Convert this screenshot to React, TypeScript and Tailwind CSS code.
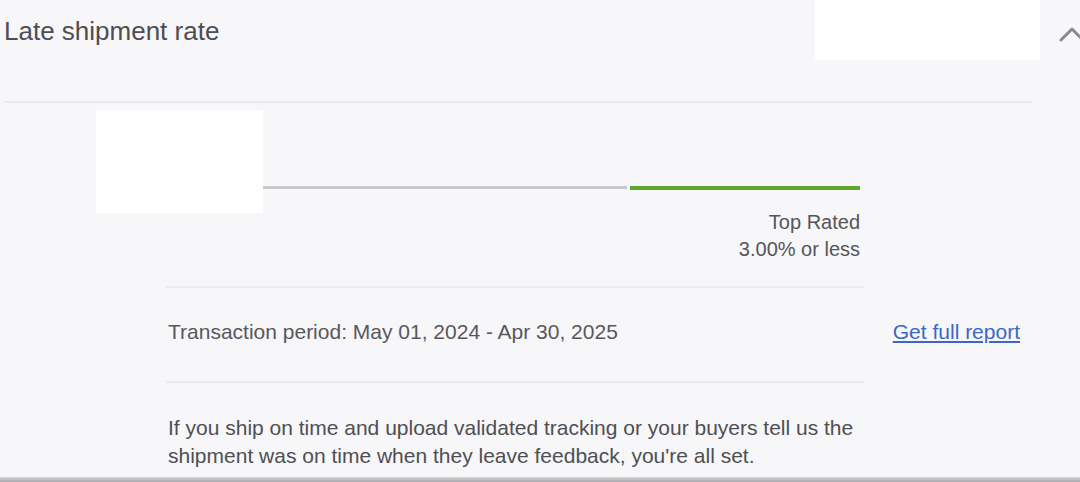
export default function App() {
  return (
    <div className="relative flex h-[482px] w-[1080px] flex-col overflow-hidden bg-[#f7f6f9] font-['Liberation_Sans',Arial,sans-serif] text-[#505050]">
      {/* Header */}
      <div className="flex h-[60px] shrink-0 items-center">
        <h2 className="pl-[4px] pt-[2px] text-[26px] leading-[30px] text-[#4d4d52]">Late shipment rate</h2>
        <div className="ml-auto h-[60px] w-[225px] bg-white" />
        <svg className="ml-[18px] mt-[8px] h-[16px] w-[22px] shrink-0 overflow-visible" viewBox="0 0 22 16" fill="none">
          <path d="M3 14 L14 3 L25 14" stroke="#8a8a8e" strokeWidth="3" strokeLinecap="round" strokeLinejoin="round" />
        </svg>
      </div>

      <div className="ml-[4px] mt-[41px] h-[2px] w-[1028px] shrink-0 bg-[#ebeaed]" />

      {/* Gauge */}
      <div className="ml-[96px] mt-[7px] flex shrink-0">
        <div className="h-[103px] w-[167px] bg-white" />
        <div className="flex w-[597px] flex-col">
          <div className="mt-[76px] flex items-start gap-[3px]">
            <div className="h-[3px] w-[364px] bg-[#c9c8cc]" />
            <div className="h-[4px] w-[230px] bg-[#5aa92c]" />
          </div>
          <div className="mt-[19px] text-right text-[20px] leading-[27px] text-[#555558]">
            <div>Top Rated</div>
            <div>3.00% or less</div>
          </div>
        </div>
      </div>

      <div className="ml-[166px] mt-[23px] h-[2px] w-[698px] shrink-0 bg-[#ebeaed]" />

      {/* Transaction period */}
      <div className="ml-[168px] mr-[60px] mt-[30px] flex items-center justify-between text-[21px] leading-[28px]">
        <span className="text-[#58585c]">Transaction period: May 01, 2024 - Apr 30, 2025</span>
        <a href="#" className="text-[#3a67c9] underline underline-offset-2">Get full report</a>
      </div>

      <div className="ml-[166px] mt-[35px] h-[2px] w-[698px] shrink-0 bg-[#ebeaed]" />

      <p className="ml-[168px] mt-[31px] w-[700px] text-[21px] leading-[28px] text-[#4f4f53]">
        If you ship on time and upload validated tracking or your buyers tell us the shipment was on time when they leave feedback, you're all set.
      </p>

      <div className="absolute bottom-0 left-0 h-[5px] w-full bg-gradient-to-b from-[#d8d8da] to-[#a9a9ab]" />
    </div>
  )
}
